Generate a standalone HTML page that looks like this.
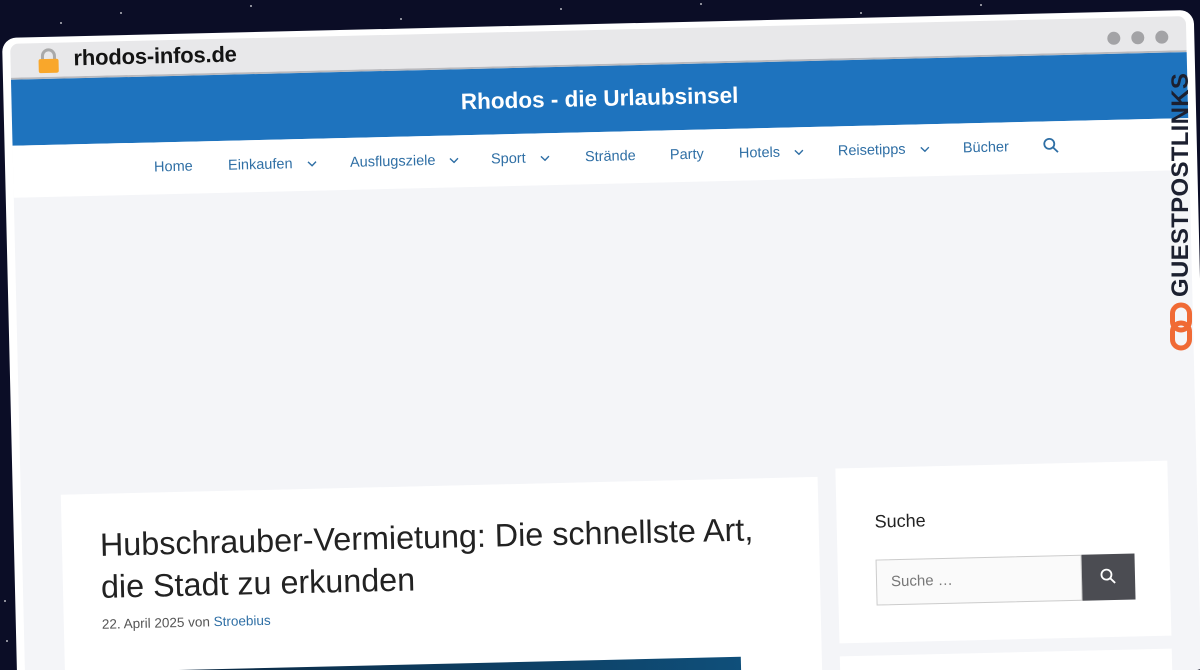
<!DOCTYPE html>
<html><head><meta charset="utf-8"><style>
*{margin:0;padding:0;box-sizing:border-box}
html{width:1200px;height:670px;overflow:hidden}
body{width:1200px;height:670px;overflow:hidden;background:#0b0d26;font-family:"Liberation Sans",sans-serif;position:relative}
.star{position:absolute;width:2px;height:2px;background:#fff;border-radius:50%;opacity:.7}
#win{position:absolute;left:2px;top:38px;width:1192px;height:660px;background:#fff;border-radius:14px;transform-origin:0 0;transform:rotate(-1.35deg);overflow:hidden}
#chrome{position:absolute;left:8px;top:6px;right:8px;height:36px;background:#e8e8ea;border-radius:8px 8px 0 0;border-bottom:2px solid #b9b9bd}
#url{position:absolute;left:63px;top:3px;font-size:22px;font-weight:bold;color:#141414;letter-spacing:-.2px}
.dot{position:absolute;top:-14px;width:13px;height:13px;border-radius:50%;background:#a3a3a6}
#page{position:absolute;left:8px;top:42px;right:8px;bottom:0;background:#f4f5f8}
#head{height:66px;background:#1e73be;color:#fff;text-align:center;font-size:22.5px;font-weight:bold;line-height:66px}
#nav{height:52px;background:#fff;position:relative;font-size:14.5px;color:#2f6fa5}
#nav span{position:absolute;top:17px;white-space:nowrap}
.ch{display:inline-block;width:10px;height:6px;margin-left:14px;vertical-align:middle}
.card{position:absolute;background:#fff}
h1{font-weight:normal;font-size:32.3px;line-height:42px;color:#222;white-space:nowrap}
</style></head><body>
<div class="star" style="left:120px;top:12px"></div><div class="star" style="left:250px;top:5px"></div>
<div class="star" style="left:400px;top:18px"></div><div class="star" style="left:560px;top:8px"></div>
<div class="star" style="left:700px;top:3px"></div><div class="star" style="left:860px;top:12px"></div>
<div class="star" style="left:980px;top:4px"></div><div class="star" style="left:60px;top:22px"></div>
<div class="star" style="left:4px;top:600px"></div><div class="star" style="left:6px;top:640px"></div>
<div id="win">
 <div id="chrome">
  <svg style="position:absolute;left:26px;top:4px" width="24" height="28" viewBox="0 0 24 28"><path d="M6 13V9a6 6 0 0 1 12 0v4" fill="none" stroke="#a9a9a9" stroke-width="3"/><rect x="2" y="12" width="20" height="14" rx="2" fill="#f9a72b"/></svg>
  <div id="url">rhodos-infos.de</div>
 </div>
 <div class="dot" style="left:1105px;top:20px"></div><div class="dot" style="left:1129px;top:20px"></div><div class="dot" style="left:1153px;top:20px"></div>
 <div id="page">
  <div id="head">Rhodos - die Urlaubsinsel</div>
  <div id="nav">
   <span style="left:141px">Home</span>
   <span style="left:215px">Einkaufen<svg class="ch" viewBox="0 0 10 6"><path d="M1 1l4 4 4-4" fill="none" stroke="#2f6fa5" stroke-width="1.4"/></svg></span>
   <span style="left:337px">Ausflugsziele<svg class="ch" viewBox="0 0 10 6"><path d="M1 1l4 4 4-4" fill="none" stroke="#2f6fa5" stroke-width="1.4"/></svg></span>
   <span style="left:478px">Sport<svg class="ch" viewBox="0 0 10 6"><path d="M1 1l4 4 4-4" fill="none" stroke="#2f6fa5" stroke-width="1.4"/></svg></span>
   <span style="left:572px">Strände</span>
   <span style="left:657px">Party</span>
   <span style="left:726px">Hotels<svg class="ch" viewBox="0 0 10 6"><path d="M1 1l4 4 4-4" fill="none" stroke="#2f6fa5" stroke-width="1.4"/></svg></span>
   <span style="left:825px">Reisetipps<svg class="ch" viewBox="0 0 10 6"><path d="M1 1l4 4 4-4" fill="none" stroke="#2f6fa5" stroke-width="1.4"/></svg></span>
   <span style="left:950px">Bücher</span>
   <svg style="position:absolute;left:1030px;top:16px" width="16" height="16" viewBox="0 0 16 16"><circle cx="6.5" cy="6.5" r="5" fill="none" stroke="#2f6fa5" stroke-width="1.8"/><path d="M10 10l5 5" stroke="#2f6fa5" stroke-width="1.8"/></svg>
  </div>
  <div class="card" style="left:40px;top:416px;width:757px;height:300px">
   <h1 style="position:absolute;left:38px;top:30px">Hubschrauber-Vermietung: Die schnellste Art,<br>die Stadt zu erkunden</h1>
   <div style="position:absolute;left:38px;top:123px;font-size:13.5px;color:#555">22. April 2025 von <span style="color:#2f6fa5">Stroebius</span></div>
   <div style="position:absolute;left:86px;top:178px;width:590px;height:100px;background:linear-gradient(90deg,#0c2740,#0f4f7a)"></div>
  </div>
  <div class="card" style="left:815px;top:408px;width:332px;height:175px">
   <div style="position:absolute;left:38px;top:44px;font-size:18px;color:#222">Suche</div>
   <div style="position:absolute;left:38px;top:92px;width:206px;height:46px;border:1px solid #ccc;background:#fafafa;font-size:15px;color:#777;padding:13px 14px">Suche …</div>
   <div style="position:absolute;left:244px;top:92px;width:53px;height:46px;background:#4b4c52"><svg style="position:absolute;left:18px;top:14px" width="16" height="16" viewBox="0 0 16 16"><circle cx="6.5" cy="6.5" r="5" fill="none" stroke="#fff" stroke-width="1.8"/><path d="M10 10l5 5" stroke="#fff" stroke-width="1.8"/></svg></div>
  </div>
  <div class="card" style="left:815px;top:596px;width:332px;height:100px"></div>
 </div>
</div>
<div style="position:absolute;left:1167px;top:297px;width:240px;height:28px;transform-origin:0 0;transform:rotate(-90deg);font-size:24px;font-weight:900;color:#1c2030;letter-spacing:.3px;line-height:28px">GUESTPOSTLINKS</div>
<svg style="position:absolute;left:1169px;top:302px" width="24" height="50" viewBox="0 0 24 50"><rect x="3.5" y="3" width="17" height="25" rx="8.5" fill="none" stroke="#f06a35" stroke-width="5"/><rect x="3.5" y="21" width="17" height="25" rx="8.5" fill="none" stroke="#f06a35" stroke-width="5"/></svg>
</body></html>
